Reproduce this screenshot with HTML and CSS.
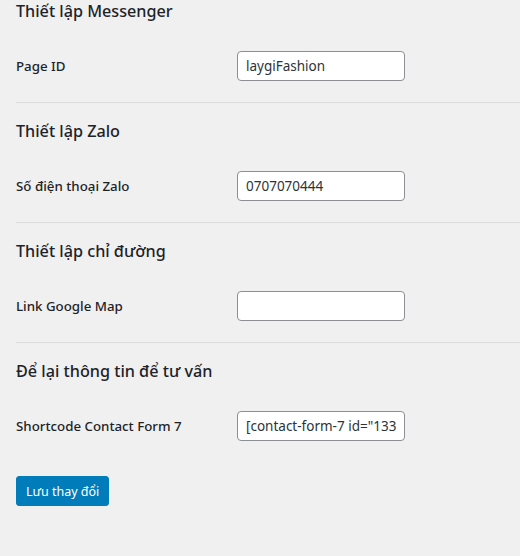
FILE: index.html
```html
<!DOCTYPE html>
<html lang="vi">
<head>
    <meta charset="UTF-8">
    <meta name="viewport" content="width=device-width, initial-scale=1.0">
    <title>Cài đặt liên hệ</title>
    <link rel="stylesheet" href="styles.css">
</head>
<body>
    <form class="settings">
        <div class="section">
            <h2>Thiết lập Messenger</h2>
            <div class="row">
                <label for="page-id">Page ID</label>
                <input type="text" id="page-id" value="laygiFashion">
            </div>
        </div>

        <div class="section">
            <h2>Thiết lập Zalo</h2>
            <div class="row">
                <label for="zalo">Số điện thoại Zalo</label>
                <input type="text" id="zalo" value="0707070444">
            </div>
        </div>

        <div class="section">
            <h2>Thiết lập chỉ đường</h2>
            <div class="row">
                <label for="map">Link Google Map</label>
                <input type="text" id="map" value="">
            </div>
        </div>

        <div class="section last">
            <h2>Để lại thông tin để tư vấn</h2>
            <div class="row">
                <label for="cf7">Shortcode Contact Form 7</label>
                <input type="text" id="cf7" value='[contact-form-7 id="1336" title="Form tư vấn"]'>
            </div>
        </div>

        <button type="submit" class="button-primary">Lưu thay đổi</button>
    </form>
</body>
</html>
```

FILE: styles.css
```css
/* Global Styles */
body {
    margin: 0;
    padding: 0 0 0 16px;
    background: #f0f0f1;
    color: #1d2327;
    font-family: 'Noto Sans', 'Open Sans', sans-serif;
    font-size: 13px;
    overflow: hidden;
}

.section {
    padding-top: 17px;
    padding-bottom: 21px;
    border-bottom: 1px solid #dcdcde;
}

.section:first-child {
    padding-top: 0;
}

.section.last {
    border-bottom: none;
    padding-bottom: 0;
}

h2 {
    margin: 0;
    font-size: 16.2px;
    font-weight: 500;
    line-height: 22px;
    color: #1d2327;
}

.row {
    display: flex;
    align-items: center;
    margin-top: 29px;
}

.row label {
    width: 221px;
    flex-shrink: 0;
    font-size: 13.3px;
    font-weight: 500;
    color: #1d2327;
}

.row input {
    width: 168px;
    height: 30px;
    box-sizing: border-box;
    padding: 0 8px;
    border: 1px solid #8c8f94;
    border-radius: 4px;
    background: #fff;
    color: #2c3338;
    font-family: inherit;
    font-size: 13.5px;
}

.button-primary {
    display: block;
    margin-top: 35px;
    height: 30px;
    padding: 0 9px;
    border: 1px solid #007cba;
    border-radius: 3px;
    background: #007cba;
    color: #fff;
    font-family: inherit;
    font-size: 12.5px;
    cursor: pointer;
}
```
